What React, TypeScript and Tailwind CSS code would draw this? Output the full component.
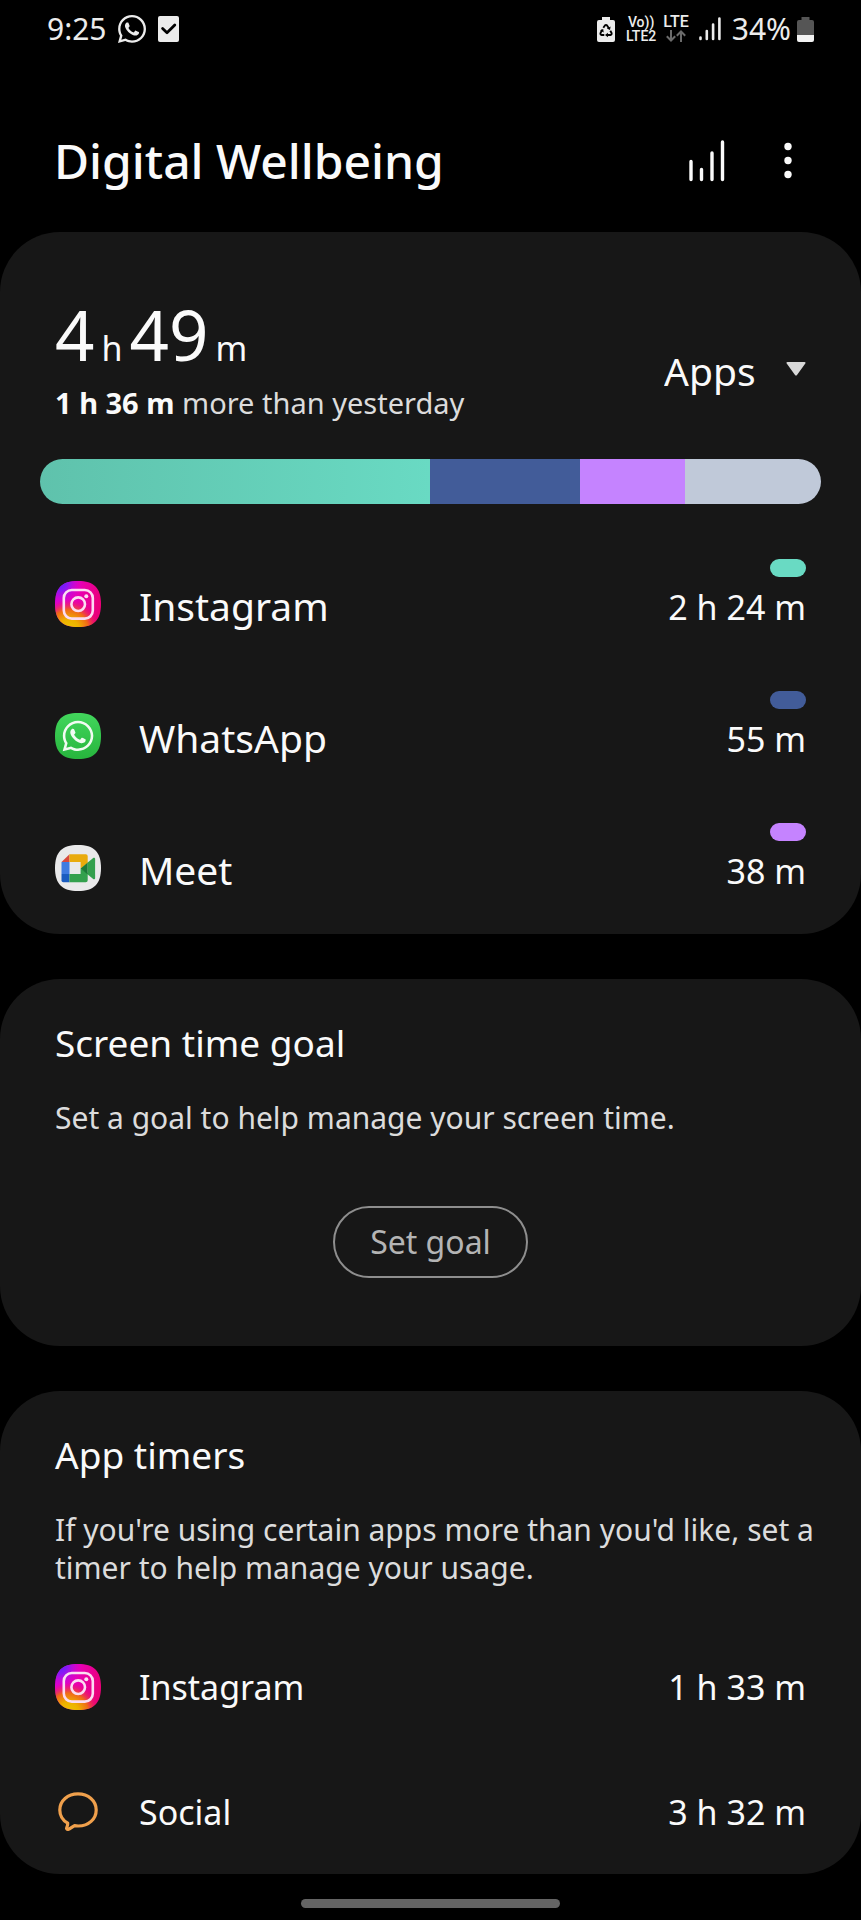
import type { ReactNode } from "react";
import { FaWhatsapp } from "react-icons/fa";

const SQUIRCLE = "M23 0C39 0 46 7 46 23S39 46 23 46 0 39 0 23 7 0 23 0Z";

function InstagramIcon() {
  return (
    <svg viewBox="0 0 46 46" className="size-[46px]" aria-hidden="true">
      <defs>
        <linearGradient id="ig-base" x1="0" y1="0.2" x2="1" y2="0.4">
          <stop offset="0" stopColor="#e000d0" />
          <stop offset="0.5" stopColor="#e800b4" />
          <stop offset="1" stopColor="#ea0078" />
        </linearGradient>
        <radialGradient id="ig-violet" cx="0.1" cy="0.04" r="0.5">
          <stop offset="0" stopColor="#5a20ff" />
          <stop offset="0.35" stopColor="#8a18f4" />
          <stop offset="1" stopColor="#e000d0" stopOpacity="0" />
        </radialGradient>
        <radialGradient id="ig-warm" cx="0.3" cy="1.06" r="0.66">
          <stop offset="0" stopColor="#ecc800" />
          <stop offset="0.35" stopColor="#eeb000" />
          <stop offset="0.65" stopColor="#f06a18" />
          <stop offset="1" stopColor="#ee1060" stopOpacity="0" />
        </radialGradient>
      </defs>
      <path d={SQUIRCLE} fill="url(#ig-base)" />
      <path d={SQUIRCLE} fill="url(#ig-violet)" />
      <path d={SQUIRCLE} fill="url(#ig-warm)" />
      <g fill="none" stroke="#fbdcf2" strokeWidth="2.6">
        <rect x="8.8" y="9" width="29" height="28.6" rx="8" />
        <circle cx="23.2" cy="23.2" r="6.8" />
      </g>
      <circle cx="31.3" cy="15.2" r="2" fill="#fbdcf2" />
    </svg>
  );
}

function WhatsAppIcon() {
  return (
    <svg viewBox="0 0 46 46" className="size-[46px]" aria-hidden="true">
      <defs>
        <linearGradient id="wa" x1="0" y1="0" x2="0" y2="1">
          <stop offset="0" stopColor="#42d65c" />
          <stop offset="1" stopColor="#27b53d" />
        </linearGradient>
      </defs>
      <path d={SQUIRCLE} fill="url(#wa)" />
      <FaWhatsapp x={5.5} y={5.5} size={35} color="#f1fbf2" />
    </svg>
  );
}

function MeetIcon() {
  return (
    <svg viewBox="0 0 46 46" className="size-[46px]" aria-hidden="true">
      <path d={SQUIRCLE} fill="#e9e9ea" />
      <path d="M6.5 17 14.5 9.3V17Z" fill="#d8483c" />
      <path d="M6.5 17h8v12h-8Z" fill="#3f7be0" />
      <path d="M6.5 29h8v8.3H8.3a1.8 1.8 0 0 1-1.8-1.8Z" fill="#1a5cc0" />
      <path d="M14.5 9.3h16.2a2 2 0 0 1 2 2V18l-7.1 5.5V17H14.5Z" fill="#e9ab0c" />
      <path d="M14.5 37.3h16.2a2 2 0 0 0 2-2V28l-7.1-4.5V29H14.5Z" fill="#33a04d" />
      <path d="m32.7 17.6 5.5-4.6c.8-.6 1.9-.2 1.9.8v19.4c0 1-1.1 1.4-1.9.8l-5.5-4.6Z" fill="#33a04d" />
      <path d="m25.6 23.5 7.1-5.9v11.8Z" fill="#1b7a38" />
    </svg>
  );
}

function SocialIcon() {
  return (
    <svg
      viewBox="0 0 46 46"
      className="size-[46px]"
      fill="none"
      stroke="#f0a04c"
      strokeWidth="3.2"
      strokeLinejoin="round"
      aria-hidden="true"
    >
      <path d="M23 4.900c10.300 0 18.200 6.900 18.200 16S33.600 37 23.300 37c-1.300 0-2.500-.1-3.800-.3-2.400 1.200-4.300 3.200-6.400 3.700-1.100.200-1.800-.6-1.400-1.700.5-1.300 1.200-2.800 1-4.500C7.900 31.300 4.800 26.700 4.800 20.900c0-9.100 7.900-16 18.200-16Z" />
    </svg>
  );
}

function StatusBar() {
  return (
    <header className="flex h-[58px] items-center justify-between px-[47px] text-[30px] leading-[40px] text-[#ececec]">
      <div className="flex items-center">
        <span>9:25</span>
        <FaWhatsapp className="ml-[9px] size-8" aria-hidden="true" />
        <svg viewBox="0 0 21 26" className="ml-[10px] h-[26px] w-[21px]" aria-hidden="true">
          <rect width="21" height="26" rx="2" fill="#ececec" />
          <path d="m4.600 12.500 4.400 4.200 7.800-7.800" fill="none" stroke="#000" strokeWidth="2.800" strokeLinecap="round" strokeLinejoin="round" />
        </svg>
      </div>
      <div className="flex items-center">
        <svg viewBox="0 0 18 25" className="h-[25px] w-[18px]" aria-hidden="true">
          <path d="M5 0h8v3h3a2 2 0 0 1 2 2v18a2 2 0 0 1-2 2H2a2 2 0 0 1-2-2V5a2 2 0 0 1 2-2h3Z" fill="#ececec" />
          <path
            d="M6.300 10.800 7.900 8.500q1.100-1.200 2.200 0l1.900 2.900M13.300 13.700l1.200 2.100q.6 1.700-1.200 2.200h-3.100M7.300 18H4.800q-1.900-.4-1.200-2.200l1.600-2.900"
            fill="none"
            stroke="#000"
            strokeWidth="1.900"
          />
          <path d="m13.600 9.500-.6 3.500-3.100-1.400ZM10.900 15.700v4.600L8 18ZM3 13.300l3.200-1.400.5 3.500Z" fill="#000" />
        </svg>
        <div className="ml-[11px] flex flex-col items-center font-[Roboto,sans-serif] text-[14px] leading-[14px] font-medium">
          <span>Vo))</span>
          <span>LTE2</span>
        </div>
        <div className="ml-[7px] flex flex-col items-center font-[Roboto,sans-serif] text-[16px] leading-[14px] font-medium">
          <span>LTE</span>
          <svg viewBox="0 0 20 12" className="my-px h-3 w-5" fill="none" stroke="#6b6b6b" strokeWidth="2" aria-hidden="true">
            <path d="M5 0v10.500M.8 6.300 5 10.500l4.200-4.200M15 12V1.500M10.800 5.700 15 1.500l4.200 4.200" />
          </svg>
        </div>
        <svg viewBox="0 0 22 24" className="ml-[10px] h-6 w-[22px]" stroke="#ececec" strokeWidth="2.600" strokeLinecap="round" aria-hidden="true">
          <path d="M1.500 20.500v1.500M7.800 14v8M14.100 7.500v14.500M20.400 1.500v20.500" />
        </svg>
        <span className="ml-[11px]">34%</span>
        <svg viewBox="0 0 17 25" className="ml-[6px] h-[25px] w-[17px]" aria-hidden="true">
          <path d="M4.500 0h8v3H15a2 2 0 0 1 2 2v13H0V5a2 2 0 0 1 2-2h2.500Z" fill="#555" />
          <path d="M0 18h17v5a2 2 0 0 1-2 2H2a2 2 0 0 1-2-2Z" fill="#f2f2f2" />
        </svg>
      </div>
    </header>
  );
}

const segments = [
  { name: "Instagram", size: 389, className: "bg-linear-to-r from-[#5fc2ac] to-[#69dac3]" },
  { name: "WhatsApp", size: 150, className: "bg-[#425c99]" },
  { name: "Meet", size: 105, className: "bg-[#c583ff]" },
  { name: "Other", size: 136, className: "bg-[#c0c9d9]" },
];

const usage = [
  { name: "Instagram", time: "2 h 24 m", icon: <InstagramIcon />, pill: "bg-[#69dac3]" },
  { name: "WhatsApp", time: "55 m", icon: <WhatsAppIcon />, pill: "bg-[#425c99]" },
  { name: "Meet", time: "38 m", icon: <MeetIcon />, pill: "bg-[#c583ff]" },
];

const timers = [
  { name: "Instagram", time: "1 h 33 m", icon: <InstagramIcon /> },
  { name: "Social", time: "3 h 32 m", icon: <SocialIcon /> },
];

function Card({ children, className }: { children: ReactNode; className: string }) {
  return <section className={`rounded-[60px] bg-[#171717] ${className}`}>{children}</section>;
}

export default function App() {
  return (
    <div className="min-h-screen bg-black font-['Noto_Sans',sans-serif] text-[#fafafa]">
      <StatusBar />
      <div className="flex h-[174px] items-center justify-between pt-8 pr-[56px] pl-[54px]">
        <h1 className="text-[48px] leading-[60px] font-medium">Digital Wellbeing</h1>
        <div className="flex items-center">
          <button type="button" aria-label="Usage charts" className="mr-[58px]">
            <svg viewBox="0 0 36 42" className="h-[42px] w-9" stroke="#fafafa" strokeWidth="3.400" strokeLinecap="round" aria-hidden="true">
              <path d="M2 21.500v18M12.500 29.500v10M23 13v26.500M33.500 2v37.500" />
            </svg>
          </button>
          <button type="button" aria-label="More options" className="pr-[12px]">
            <svg viewBox="0 0 10 42" className="h-[42px] w-[10px]" fill="#fafafa" aria-hidden="true">
              <circle cx="5" cy="6.500" r="3.700" />
              <circle cx="5" cy="20.500" r="3.700" />
              <circle cx="5" cy="34.500" r="3.700" />
            </svg>
          </button>
        </div>
      </div>

      <main className="flex flex-col gap-[45px]">
        <Card className="pt-[67px]">
          <div className="flex items-end justify-between px-[55px]">
            <div>
              <p className="flex items-baseline text-[69px] leading-[70px]">
                4<span className="mx-[7px] text-[34px] leading-[34px]">h</span>49
                <span className="ml-[7px] text-[34px] leading-[34px]">m</span>
              </p>
              <p className="mt-[14px] text-[29px] leading-[40px] text-[#dcdcdc]">
                <b className="font-bold text-[#fafafa]">1 h 36 m</b> more than yesterday
              </p>
            </div>
            <div className="relative mb-7">
              <select aria-label="Usage type" className="appearance-none bg-transparent pr-[50px] text-[39px] leading-[48px]">
                <option>Apps</option>
              </select>
              <svg viewBox="0 0 20 14" className="pointer-events-none absolute top-[15px] right-0 h-[14px] w-5" aria-hidden="true">
                <path d="M1.500 0h17c1 0 1.400.9.800 1.600l-8.300 11.400c-.5.700-1.500.7-2 0L.7 1.600C.1.9.500 0 1.500 0Z" fill="#d8d8d8" />
              </svg>
            </div>
          </div>
          <div className="mx-10 mt-[36px] flex h-[45px] overflow-hidden rounded-full">
            {segments.map((s) => (
              <div key={s.name} className={s.className} style={{ flexGrow: s.size, flexBasis: 0 }} />
            ))}
          </div>
          <ul className="mt-[34px] px-[55px]">
            {usage.map((u) => (
              <li key={u.name} className="flex h-[132px] items-center">
                {u.icon}
                <span className="ml-[38px] pt-1 text-[39px] leading-[48px]">{u.name}</span>
                <span className="ml-auto flex flex-col items-end pb-[21px] text-[34px] leading-[44px]">
                  <span className={`mb-2 h-[18px] w-9 rounded-full ${u.pill}`} />
                  {u.time}
                </span>
              </li>
            ))}
          </ul>
        </Card>

        <Card className="px-[55px] pt-10 pb-[68px]">
          <h2 className="text-[37px] leading-[48px]">Screen time goal</h2>
          <p className="mt-8 text-[30px] leading-[38px] text-[#dcdcdc]">Set a goal to help manage your screen time.</p>
          <button
            type="button"
            className="mx-auto mt-[69px] block h-[72px] rounded-full border-2 border-[#8e8e8e] px-[35px] text-[32px] leading-[40px] text-[#b4b4b4]"
          >
            Set goal
          </button>
        </Card>

        <Card className="px-[55px] pt-10">
          <h2 className="text-[37px] leading-[48px]">App timers</h2>
          <p className="-mr-3 mt-8 text-[30px] leading-[38px] text-[#dcdcdc]">
            If you're using certain apps more than you'd like, set a timer to help manage your usage.
          </p>
          <ul className="mt-[37px]">
            {timers.map((t) => (
              <li key={t.name} className="flex h-[125px] items-center text-[34px] leading-[44px]">
                {t.icon}
                <span className="ml-[38px]">{t.name}</span>
                <span className="ml-auto">{t.time}</span>
              </li>
            ))}
          </ul>
        </Card>
      </main>

      <div className="flex justify-center pt-[25px] pb-3">
        <div className="h-[9px] w-[30%] rounded-full bg-[#646464]" />
      </div>
    </div>
  );
}
